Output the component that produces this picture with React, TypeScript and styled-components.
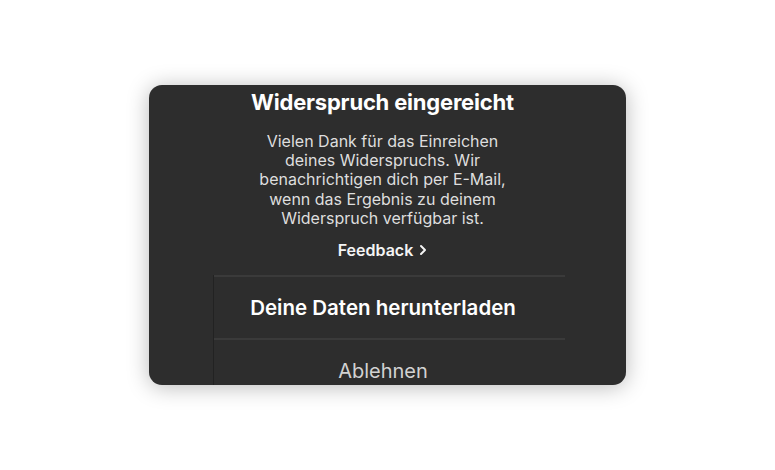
import React, { FC } from "react";
import styled, { createGlobalStyle } from "styled-components";

const GlobalStyle = createGlobalStyle`
  html, body {
    margin: 0;
    padding: 0;
    background: #ffffff;
  }
  body {
    font-family: Inter, "Noto Sans", "Liberation Sans", sans-serif;
    -webkit-font-smoothing: antialiased;
  }
`;

const Page = styled.div`
  width: 775px;
  height: 470px;
  display: flex;
  align-items: center;
  justify-content: center;
`;

const Sheet = styled.div`
  width: 477px;
  height: 300px;
  margin-left: -1px;
  background: #2d2d2d;
  border-radius: 13px;
  box-shadow: 0 2px 22px rgba(0, 0, 0, 0.28);
  overflow: hidden;
  display: flex;
  padding-left: 64px;
  box-sizing: border-box;
`;

const Column = styled.div`
  width: 352px;
  display: flex;
  flex-direction: column;
`;

const TextBlock = styled.div`
  padding-right: 12px;
  padding-top: 4px;
  display: flex;
  flex-direction: column;
  align-items: center;
  text-align: center;
`;

const Title = styled.h1`
  margin: 0;
  font-size: 22px;
  line-height: 26px;
  font-weight: 700;
  color: #ffffff;
  letter-spacing: -0.2px;
`;

const Message = styled.p`
  margin: 17px 0 0;
  width: 262px;
  font-size: 16px;
  line-height: 19.2px;
  font-weight: 400;
  color: #dedede;
`;

const FeedbackLink = styled.a`
  margin-top: 12px;
  display: flex;
  align-items: center;
  gap: 6px;
  font-size: 16px;
  line-height: 20px;
  font-weight: 600;
  color: #f4f4f4;
  text-decoration: none;
  cursor: pointer;
`;

const ActionList = styled.div`
  margin-top: 15px;
  border-left: 1px solid #222222;
  flex: 1;
  display: flex;
  flex-direction: column;
`;

const Action = styled.button<{ $primary?: boolean }>`
  height: 63px;
  flex-shrink: 0;
  border: none;
  border-top: 2px solid #3a3a3a;
  background: transparent;
  padding: 0 12px 0 0;
  font-family: inherit;
  font-size: ${(p) => (p.$primary ? "20.5px" : "20px")};
  font-weight: ${(p) => (p.$primary ? 600 : 400)};
  color: ${(p) => (p.$primary ? "#ffffff" : "#d2d2d2")};
  cursor: pointer;
`;

const Chevron: FC = () => (
  <svg width="8" height="12" viewBox="0 0 8 12">
    <path
      d="M2 2 L6 6 L2 10"
      fill="none"
      stroke="#f4f4f4"
      strokeWidth="2"
      strokeLinecap="round"
      strokeLinejoin="round"
    />
  </svg>
);

const App: FC = () => (
  <>
    <GlobalStyle />
    <Page>
      <Sheet>
        <Column>
          <TextBlock>
            <Title>Widerspruch eingereicht</Title>
            <Message>
              Vielen Dank für das Einreichen deines Widerspruchs. Wir
              benachrichtigen dich per E-Mail, wenn das Ergebnis zu deinem
              Widerspruch verfügbar ist.
            </Message>
            <FeedbackLink>
              Feedback
              <Chevron />
            </FeedbackLink>
          </TextBlock>
          <ActionList>
            <Action $primary>Deine Daten herunterladen</Action>
            <Action>Ablehnen</Action>
          </ActionList>
        </Column>
      </Sheet>
    </Page>
  </>
);

export default App;
